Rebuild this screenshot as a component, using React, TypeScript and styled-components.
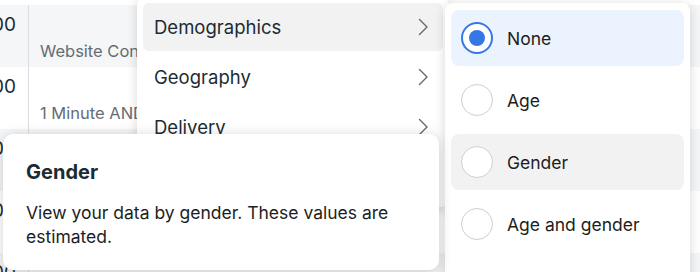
import React from 'react';
import styled, { createGlobalStyle } from 'styled-components';

const GlobalStyle = createGlobalStyle`
  html, body {
    margin: 0;
    padding: 0;
    background: #fff;
  }
  body {
    font-family: Inter, 'Noto Sans', 'Liberation Sans', sans-serif;
    -webkit-font-smoothing: antialiased;
  }
`;

const Page = styled.div`
  position: relative;
  width: 700px;
  height: 272px;
  overflow: hidden;
  background: #fff;
`;

const Table = styled.div`
  padding-top: 5px;
  display: flex;
  flex-direction: column;
`;

const Row = styled.div<{ $shaded: boolean }>`
  display: flex;
  height: 62px;
  background: ${(p) => (p.$shaded ? '#f5f6f7' : '#fff')};
`;

const NumberCell = styled.div`
  width: 29px;
  flex-shrink: 0;
  border-right: 1px solid #dadde1;
  overflow: hidden;
  display: flex;
  justify-content: flex-end;
  padding: 8px 12px 0 0;
  box-sizing: border-box;
  font-size: 19px;
  line-height: 24px;
  color: #1c2b33;
  white-space: nowrap;
`;

const NameCell = styled.div`
  flex: 1;
  padding: 35px 0 0 11px;
  font-size: 16.5px;
  line-height: 22px;
  color: #656d74;
  white-space: nowrap;
`;

const Menu = styled.div`
  position: absolute;
  background: #fff;
  border-radius: 8px;
  box-shadow: 0 2px 12px rgba(0, 0, 0, 0.16);
  box-sizing: border-box;
  padding: 6px;
  display: flex;
  flex-direction: column;
`;

const SubMenu = styled(Menu)`
  left: 137px;
  top: -3px;
  width: 312px;
  gap: 2px;
`;

const OptionMenu = styled(Menu)`
  left: 445px;
  top: 3px;
  width: 245px;
  height: 290px;
  padding-top: 7px;
  gap: 6px;
`;

const SubItem = styled.div<{ $active?: boolean }>`
  height: 48px;
  border-radius: 6px;
  background: ${(p) => (p.$active ? '#f2f2f2' : 'transparent')};
  display: flex;
  align-items: center;
  justify-content: space-between;
  padding: 0 14px 0 11px;
  font-size: 18.5px;
  color: #1c2b33;
`;

const OptionItem = styled.div<{ $bg?: string }>`
  height: 56px;
  border-radius: 8px;
  background: ${(p) => p.$bg || 'transparent'};
  display: flex;
  align-items: center;
  gap: 14px;
  padding-left: 10px;
  font-size: 17.5px;
  color: #1c1e21;
`;

const Radio = styled.span<{ $checked?: boolean }>`
  width: 32px;
  height: 32px;
  border-radius: 50%;
  box-sizing: border-box;
  flex-shrink: 0;
  background: #fff;
  border: ${(p) => (p.$checked ? '2px solid #3578e5' : '1px solid #ccd0d5')};
  display: flex;
  align-items: center;
  justify-content: center;
  &::after {
    content: '';
    display: ${(p) => (p.$checked ? 'block' : 'none')};
    width: 16px;
    height: 16px;
    border-radius: 50%;
    background: #3578e5;
  }
`;

const Tooltip = styled.div`
  position: absolute;
  left: 3px;
  top: 134px;
  width: 436px;
  height: 136px;
  box-sizing: border-box;
  padding: 26px 23px;
  background: #fff;
  border-radius: 10px;
  box-shadow: 0 2px 14px rgba(0, 0, 0, 0.18);
  color: #1c2b33;
`;

const TipTitle = styled.div`
  font-size: 20px;
  font-weight: 700;
  line-height: 24px;
  margin-bottom: 17px;
`;

const TipBody = styled.div`
  font-size: 17.5px;
  line-height: 24px;
  color: #1c1e21;
`;

const Chevron = () => (
  <svg width="11" height="18" viewBox="0 0 11 18" fill="none">
    <path d="M1.5 1.5 9 9l-7.5 7.5" stroke="#65676b" strokeWidth="1.4" strokeLinecap="round" strokeLinejoin="round" />
  </svg>
);

const rows = [
  { value: '1,000', name: 'Website Conversions' },
  { value: '1,000', name: '1 Minute AND Purchase' },
  { value: '2,000', name: 'Landing Page Views' },
  { value: '2,000', name: 'Link Clicks' },
  { value: '3,000', name: 'Reach' },
];

const subItems = ['Demographics', 'Geography', 'Delivery', 'Time'];

const options = [
  { label: 'None', checked: true, bg: '#ebf3ff' },
  { label: 'Age' },
  { label: 'Gender', bg: '#f2f2f2' },
  { label: 'Age and gender' },
];

export default function App() {
  return (
    <Page>
      <GlobalStyle />
      <Table>
        {rows.map((r, i) => (
          <Row key={i} $shaded={i % 2 === 0}>
            <NumberCell>{r.value}</NumberCell>
            <NameCell>{r.name}</NameCell>
          </Row>
        ))}
      </Table>

      <SubMenu>
        {subItems.map((s, i) => (
          <SubItem key={s} $active={i === 0}>
            {s}
            <Chevron />
          </SubItem>
        ))}
      </SubMenu>

      <OptionMenu>
        {options.map((o) => (
          <OptionItem key={o.label} $bg={o.bg}>
            <Radio $checked={o.checked} />
            {o.label}
          </OptionItem>
        ))}
      </OptionMenu>

      <Tooltip>
        <TipTitle>Gender</TipTitle>
        <TipBody>View your data by gender. These values are estimated.</TipBody>
      </Tooltip>
    </Page>
  );
}
